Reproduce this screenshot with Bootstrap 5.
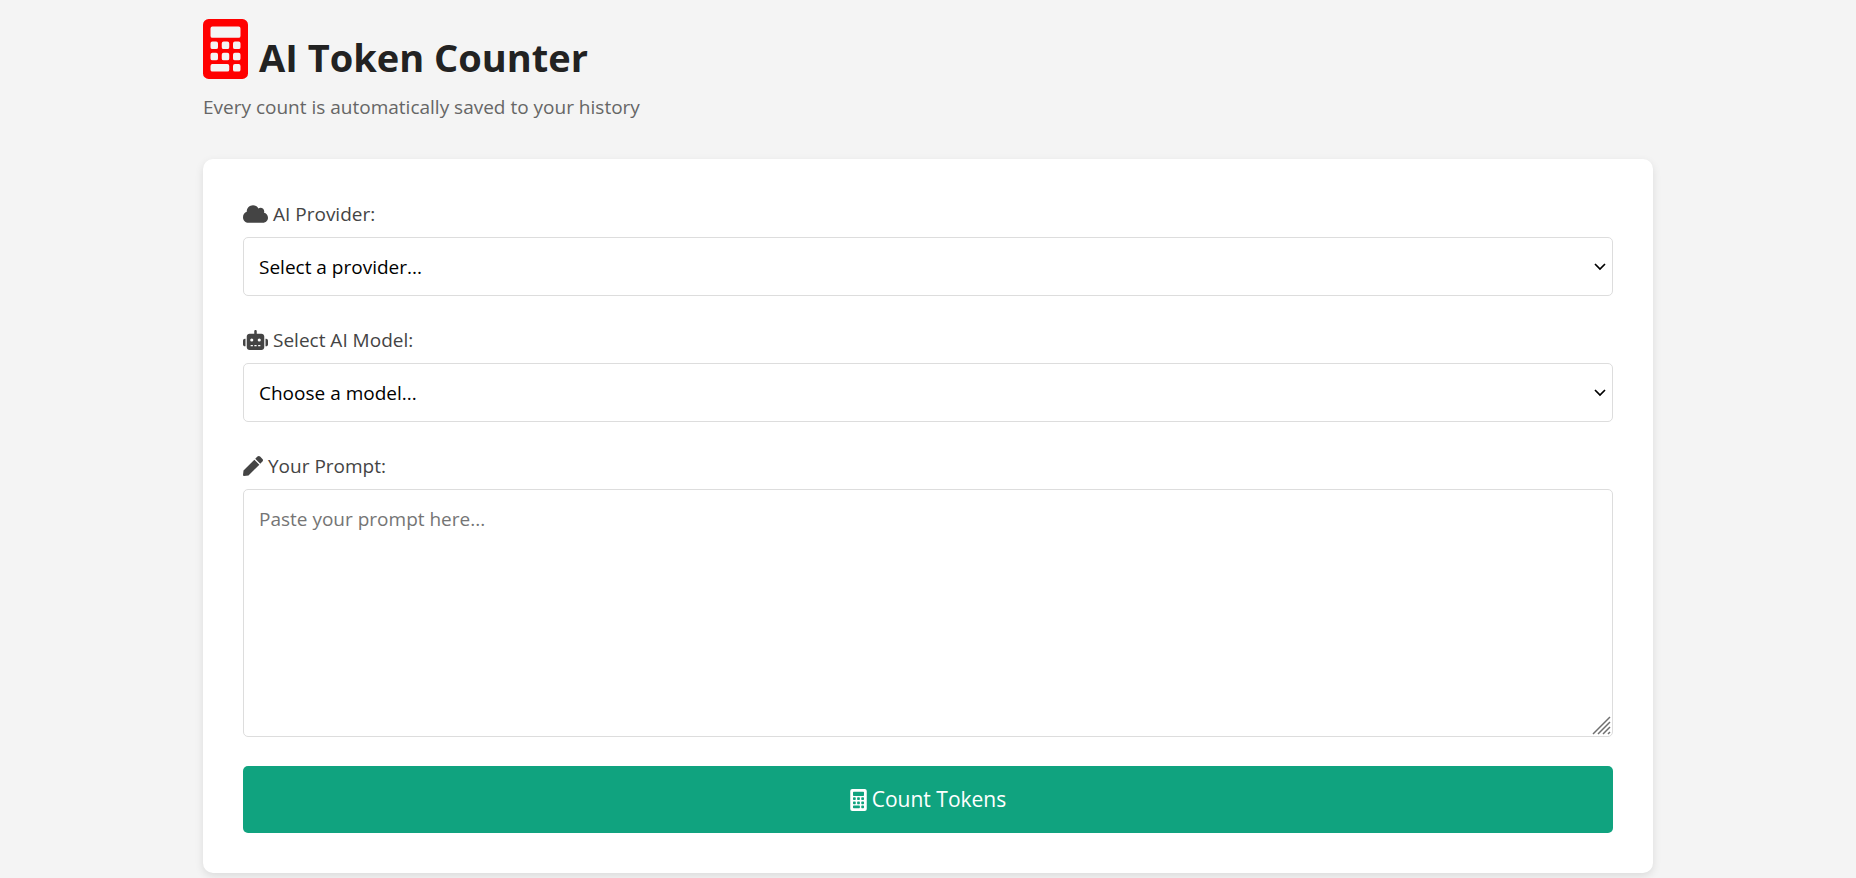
<!DOCTYPE html>
<html lang="en">
<head>
<meta charset="utf-8">
<meta name="viewport" content="width=device-width, initial-scale=1">
<title>AI Token Counter</title>
<link href="https://cdn.jsdelivr.net/npm/bootstrap@5.3.0/dist/css/bootstrap.min.css" rel="stylesheet">
<style>
  body { background: #f4f4f4; color: #222; font-family: "Open Sans", "Noto Sans", sans-serif; font-size: 19px; line-height: 30px; }
  .page { max-width: 1450px; padding-top: 19px; padding-bottom: 24px; }
  .page-title { font-size: 38px; line-height: 60px; font-weight: 700; gap: 11px; }
  .page-title svg { width: 45px; height: 60px; color: #f00; }
  .page-title span { padding-top: 8px; }
  .subtitle { color: #666; margin: 5px 0 37px; }
  .panel { padding: 40px; border-radius: 10px; background: #fff; box-shadow: 0 3px 8px rgba(0, 0, 0, .1); }
  .field { margin-bottom: 29px; }
  .field label { color: #444; gap: 5px; margin-bottom: 8px; }
  .field label svg { height: 20px; }
  .field .form-control, .field .form-select { border: 1px solid #ddd; border-radius: 5px; padding: 15px 15px 13px; font-size: 19px; line-height: 29px; color: #000; }
  .field .form-select { background-image: url("data:image/svg+xml,%3Csvg xmlns='http://www.w3.org/2000/svg' viewBox='0 0 12 8'%3E%3Cpath d='M1 1l5 5 5-5' fill='none' stroke='%23000' stroke-width='1.700'/%3E%3C/svg%3E"); background-size: 12px 8px; background-position: right 6px center; }
  .field textarea.form-control { min-height: 248px; resize: vertical; }
  .field textarea::placeholder { color: #757575; }
  .field textarea::-webkit-resizer { background: transparent; }
  .grip { width: 20px; height: 20px; right: 1px; bottom: 1px; pointer-events: none; }
  .btn-count { --bs-btn-color: #fff; --bs-btn-bg: #10a37f; --bs-btn-hover-color: #fff; --bs-btn-hover-bg: #0d8c6d; --bs-btn-active-color: #fff; --bs-btn-active-bg: #0b7a5f; --bs-btn-border-width: 0; --bs-btn-border-radius: 5px; --bs-btn-font-size: 21px; --bs-btn-line-height: 31px; --bs-btn-padding-y: 18px; gap: 5px; }
  .btn-count svg { width: 17px; height: 22px; }
</style>
</head>
<body>
<svg class="d-none" aria-hidden="true">
  <symbol id="calculator" viewBox="0 0 384 512">
    <path fill="currentColor" fill-rule="evenodd" d="M48 0H336a48 48 0 0 1 48 48V464a48 48 0 0 1-48 48H48a48 48 0 0 1-48-48V48A48 48 0 0 1 48 0zM80 64a16 16 0 0 0-16 16v64a16 16 0 0 0 16 16H304a16 16 0 0 0 16-16V80a16 16 0 0 0-16-16zM80 192a16 16 0 0 0-16 16v32a16 16 0 0 0 16 16h32a16 16 0 0 0 16-16v-32a16 16 0 0 0-16-16zM176 192a16 16 0 0 0-16 16v32a16 16 0 0 0 16 16h32a16 16 0 0 0 16-16v-32a16 16 0 0 0-16-16zM272 192a16 16 0 0 0-16 16v32a16 16 0 0 0 16 16h32a16 16 0 0 0 16-16v-32a16 16 0 0 0-16-16zM80 288a16 16 0 0 0-16 16v32a16 16 0 0 0 16 16h32a16 16 0 0 0 16-16v-32a16 16 0 0 0-16-16zM176 288a16 16 0 0 0-16 16v32a16 16 0 0 0 16 16h32a16 16 0 0 0 16-16v-32a16 16 0 0 0-16-16zM272 288a16 16 0 0 0-16 16v32a16 16 0 0 0 16 16h32a16 16 0 0 0 16-16v-32a16 16 0 0 0-16-16zM80 384a16 16 0 0 0-16 16v32a16 16 0 0 0 16 16H208a16 16 0 0 0 16-16v-32a16 16 0 0 0-16-16zM272 384a16 16 0 0 0-16 16v32a16 16 0 0 0 16 16h32a16 16 0 0 0 16-16v-32a16 16 0 0 0-16-16z"/>
  </symbol>
</svg>
<main class="page container-fluid px-0">
  <header>
    <h1 class="page-title d-flex mb-0">
      <svg aria-hidden="true"><use href="#calculator"/></svg>
      <span>AI Token Counter</span>
    </h1>
    <p class="subtitle">Every count is automatically saved to your history</p>
  </header>
  <form class="panel">
    <div class="field">
      <label for="provider" class="d-flex align-items-center">
        <svg viewBox="0 0 640 512" fill="currentColor" aria-hidden="true"><path d="M0 336c0 79.500 64.500 144 144 144H512c70.700 0 128-57.300 128-128c0-61.900-44-113.600-102.400-125.400c4.100-10.700 6.400-22.400 6.400-34.600c0-53-43-96-96-96c-19.700 0-38.100 6-53.300 16.200C367 64.200 315.300 32 256 32C167.600 32 96 103.600 96 192c0 2.700.1 5.400.2 8.100C40.200 219.800 0 273.200 0 336z"/></svg>
        AI Provider:
      </label>
      <select id="provider" class="form-select"><option>Select a provider...</option></select>
    </div>
    <div class="field">
      <label for="model" class="d-flex align-items-center">
        <svg viewBox="0 0 640 512" fill="currentColor" aria-hidden="true"><path fill-rule="evenodd" d="M320 0c17.700 0 32 14.300 32 32V96H472c39.800 0 72 32.200 72 72V440c0 39.800-32.200 72-72 72H168c-39.800 0-72-32.200-72-72V168c0-39.800 32.200-72 72-72H288V32c0-17.700 14.300-32 32-32zM208 384a16 16 0 0 0 0 32h32a16 16 0 0 0 0-32zM304 384a16 16 0 0 0 0 32h32a16 16 0 0 0 0-32zM400 384a16 16 0 0 0 0 32h32a16 16 0 0 0 0-32zM264 256a40 40 0 1 0-80 0 40 40 0 1 0 80 0zM416 296a40 40 0 1 0 0-80 40 40 0 1 0 0 80zM48 224H64V416H48c-26.500 0-48-21.500-48-48V272c0-26.500 21.500-48 48-48zM592 224c26.500 0 48 21.500 48 48v96c0 26.500-21.500 48-48 48H576V224z"/></svg>
        Select AI Model:
      </label>
      <select id="model" class="form-select"><option>Choose a model...</option></select>
    </div>
    <div class="field">
      <label for="prompt" class="d-flex align-items-center">
        <svg viewBox="0 0 512 512" fill="currentColor" aria-hidden="true"><path d="M290.740 93.240l128.020 128.020-277.990 277.990-114.140 12.600C11.350 513.540-1.560 500.620.140 485.340l12.700-114.220 277.900-277.880zM497.940 74.180l-60.110-60.110c-18.750-18.750-49.160-18.750-67.910 0l-56.550 56.550 128.020 128.020 56.550-56.550c18.750-18.760 18.750-49.160 0-67.910z"/></svg>
        Your Prompt:
      </label>
      <div class="position-relative">
        <textarea id="prompt" class="form-control d-block" placeholder="Paste your prompt here..."></textarea>
        <svg class="grip position-absolute" viewBox="0 0 20 20" fill="none" stroke="#707070" stroke-width="1.500" aria-hidden="true"><path d="M1 18L18 1M6 18L18 6M11 18l7-7M16 18l2-2"/></svg>
      </div>
    </div>
    <button type="button" class="btn btn-count w-100 d-flex align-items-center justify-content-center">
      <svg aria-hidden="true"><use href="#calculator"/></svg>
      Count Tokens
    </button>
  </form>
</main>
</body>
</html>
